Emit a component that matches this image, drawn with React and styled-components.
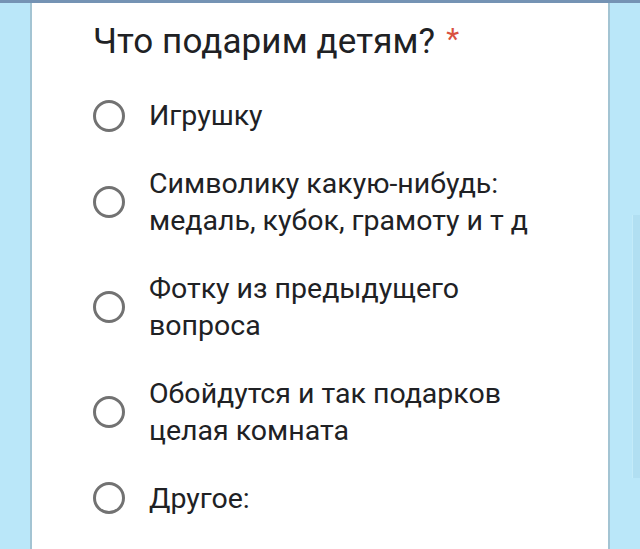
import styled, { createGlobalStyle } from "styled-components";

const Global = createGlobalStyle`
  html, body {
    margin: 0;
    padding: 0;
    background: #bae7f9;
  }
  body {
    font-family: Roboto, "Noto Sans", "Liberation Sans", sans-serif;
  }
`

const Screen = styled.div`
  width: 640px;
  height: 549px;
  overflow: hidden;
  display: flex;
  flex-direction: column;
  background: #bae7f9;
`
const TopLine = styled.div`
  height: 3px;
  background: #7593b4;
  flex: none;
`
const Row = styled.div`
  flex: 1;
  display: flex;
`
const Side = styled.div`
  width: 30px;
  flex: none;
  display: flex;
  flex-direction: column;
  align-items: flex-end;
  padding-top: ${p => p.$padTop || 0}px;
  box-sizing: border-box;
`
const SidePanel = styled.div`
  width: 7px;
  height: 263px;
  background: #b1dff2;
  border-left: 1px solid #c4ebf9;
`
const Card = styled.div`
  flex: 1;
  background: #fff;
  border-left: 2px solid #a3c4d3;
  border-right: 2px solid #a3c4d3;
  padding: 15px 0 0 61px;
`
const Title = styled.h2`
  margin: 0 0 34px;
  font-size: 35px;
  font-weight: 400;
  line-height: 42px;
  color: #202124;
  letter-spacing: 0.1px;
`
const Star = styled.span`
  color: #d9513f;
  font-size: 30px;
  margin-left: 11px;
  vertical-align: 4px;
`
const Options = styled.div`
  display: flex;
  flex-direction: column;
  gap: 30px;
`
const Option = styled.label`
  display: flex;
  align-items: center;
  gap: 24px;
`
const Radio = styled.span`
  width: 26px;
  height: 26px;
  border: 3px solid #727272;
  border-radius: 50%;
  flex: none;
`
const Label = styled.span`
  font-size: 28.5px;
  line-height: 37.5px;
  color: #202124;
`

const options = [
  ["Игрушку"],
  ["Символику какую-нибудь:", "медаль, кубок, грамоту и т д"],
  ["Фотку из предыдущего", "вопроса"],
  ["Обойдутся и так подарков", "целая комната"],
  ["Другое:"],
]

export default function App() {
  return (
    <Screen>
      <Global />
      <TopLine />
      <Row>
        <Side />
        <Card>
          <Title>
            Что подарим детям?<Star>*</Star>
          </Title>
          <Options>
            {options.map((lines, i) => (
              <Option key={i}>
                <Radio />
                <Label>
                  {lines.map((l, j) => (
                    <span key={j}>
                      {l}
                      {j < lines.length - 1 && <br />}
                    </span>
                  ))}
                </Label>
              </Option>
            ))}
          </Options>
        </Card>
        <Side $padTop={212}>
          <SidePanel />
        </Side>
      </Row>
    </Screen>
  )
}
